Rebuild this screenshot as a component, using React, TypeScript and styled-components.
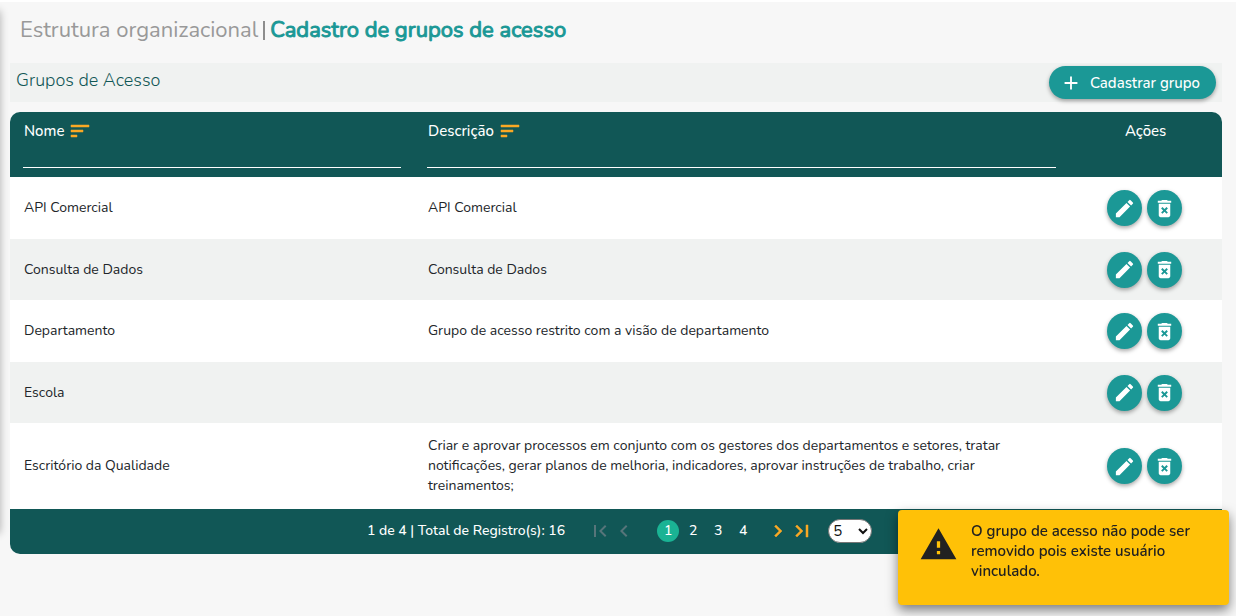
import React from "react";
import styled, { createGlobalStyle } from "styled-components";
import {
  MdAdd,
  MdChevronLeft,
  MdChevronRight,
  MdDeleteForever,
  MdEdit,
  MdFirstPage,
  MdLastPage,
  MdSort,
  MdWarning,
} from "react-icons/md";

const GlobalStyle = createGlobalStyle`
  * { box-sizing: border-box; }
  body {
    margin: 0;
    background: #f7f7f7;
    color: #212529;
    font-family: Nunito, Lato, "Open Sans", sans-serif;
    font-size: 14px;
    line-height: 20px;
  }
  button, input, select { font: inherit; color: inherit; }
`;

const Page = styled.main`
  position: relative;
  min-height: 100vh;
  padding: 0 14px 16px 10px;
  border-top: 2px solid #ffffff;
`;

const MenuEdge = styled.div`
  position: absolute;
  top: 4px;
  left: -10px;
  width: 10px;
  height: 522px;
  box-shadow: 0 5px 8px rgba(0, 0, 0, 0.3);
`;

const Breadcrumb = styled.h1`
  display: flex;
  align-items: center;
  gap: 5px;
  margin: 0;
  padding: 12px 10px 17px;
  font-size: 22px;
  line-height: 32px;
  font-weight: 400;
  color: #999999;
`;

const Divider = styled.span`
  width: 2px;
  height: 19px;
  background: #8d8d8d;
`;

const Current = styled.strong`
  font-weight: 400;
  color: #1b9896;
  -webkit-text-stroke: 1px #1b9896;
`;

const Toolbar = styled.header`
  display: flex;
  justify-content: space-between;
  height: 39px;
  margin-bottom: 10px;
  padding: 3px 6px;
  background: #f0f2f1;
`;

const Heading = styled.h2`
  margin: 0;
  font-size: 18px;
  line-height: 28px;
  font-weight: 300;
  color: #115756;
`;

const AddButton = styled.button`
  display: flex;
  align-items: center;
  gap: 8px;
  height: 33px;
  padding: 0 16px 0 11px;
  border: 0;
  border-radius: 17px;
  background: #1b9896;
  color: #ffffff;
  font-size: 15px;
  font-weight: 500;
  box-shadow: 0 2px 4px rgba(0, 0, 0, 0.35);
  cursor: pointer;
`;

const Panel = styled.section`
  overflow: hidden;
  border-radius: 10px;
  background: #ffffff;
`;

const Table = styled.table`
  width: 100%;
  border-collapse: collapse;
  table-layout: fixed;
`;

const HeadCell = styled.th<{ $width: string; $center?: boolean }>`
  width: ${(p) => p.$width};
  height: 65px;
  padding: 6px 13px 9px;
  vertical-align: top;
  text-align: ${(p) => (p.$center ? "center" : "left")};
  background: #115756;
  color: #ffffff;
  font-size: 15px;
  font-weight: 500;
  line-height: 26px;
`;

const SortLabel = styled.button`
  display: flex;
  align-items: center;
  gap: 4px;
  height: 26px;
  padding: 0 1px;
  border: 0;
  background: none;
  cursor: pointer;

  svg { color: #f9a825; }
  path:not([fill="none"]) { stroke: #f9a825; stroke-width: 0.5px; }
`;

const FilterInput = styled.input`
  display: block;
  width: 100%;
  height: 24px;
  padding: 0;
  border: 0;
  border-bottom: 1px solid #ffffff;
  background: transparent;
  outline: none;
`;

const Row = styled.tr`
  height: 62px;

  &:nth-child(even) {
    height: 61px;
    background: #f0f2f1;
  }

  &:last-child { height: 86px; }
`;

const Cell = styled.td`
  padding: 0 14px;

  &:last-child { padding-right: 16px; }
`;

const Actions = styled.div`
  display: flex;
  justify-content: center;
  gap: 5px;
`;

const RoundButton = styled.button`
  display: grid;
  place-items: center;
  width: 35px;
  height: 36px;
  padding: 0;
  border: 0;
  border-radius: 50%;
  background: #1b9896;
  color: #ffffff;
  box-shadow: 0 2px 4px rgba(0, 0, 0, 0.35);
  cursor: pointer;
`;

const Pager = styled.nav`
  display: flex;
  justify-content: center;
  align-items: center;
  height: 45px;
  padding: 0 0 2px 7px;
  background: #115756;
  color: #ffffff;
  font-weight: 500;
`;

const Summary = styled.span`
  margin-right: 23px;
`;

const PageGroup = styled.div`
  display: flex;
  gap: 3px;
  margin: 0 12px 0 21px;
`;

const PageButton = styled.button<{ $active?: boolean }>`
  width: 22px;
  height: 22px;
  padding: 0;
  border: 0;
  border-radius: 50%;
  background: ${(p) => (p.$active ? "#1ab394" : "transparent")};
  cursor: pointer;
`;

const StepButton = styled.button`
  display: grid;
  place-items: center;
  width: 24px;
  height: 24px;
  padding: 0;
  border: 0;
  background: none;
  color: #f9a825;
  cursor: pointer;

  &:disabled { color: #57757a; cursor: default; }
  &:enabled path:not([fill="none"]) { stroke: #f9a825; stroke-width: 0.5px; }
  &:disabled path { stroke: none; }
`;

const SizeSelect = styled.select`
  width: 44px;
  height: 24px;
  margin-left: 14px;
  border: 1px solid #767676;
  border-radius: 12px;
  background: #ffffff;
  color: #111111;
  font-size: 15px;
  font-weight: 400;
`;

const Toast = styled.div`
  position: fixed;
  right: 7px;
  bottom: 11px;
  display: flex;
  gap: 13px;
  width: 331px;
  height: 95px;
  padding: 11px 30px 0 21px;
  border-radius: 4px;
  background: #ffc107;
  color: #212121;
  font-size: 15px;
  font-weight: 600;
  box-shadow: 0 5px 12px rgba(0, 0, 0, 0.5);

  svg { flex: none; margin-top: 4px; }
  p { margin: 0; }
`;

const groups = [
  { name: "API Comercial", description: "API Comercial" },
  { name: "Consulta de Dados", description: "Consulta de Dados" },
  { name: "Departamento", description: "Grupo de acesso restrito com a visão de departamento" },
  { name: "Escola", description: "" },
  {
    name: "Escritório da Qualidade",
    description:
      "Criar e aprovar processos em conjunto com os gestores dos departamentos e setores, tratar notificações, gerar planos de melhoria, indicadores, aprovar instruções de trabalho, criar treinamentos;",
  },
];

export default function App() {
  return (
    <Page>
      <GlobalStyle />
      <MenuEdge />
      <Breadcrumb>
        <span>Estrutura organizacional</span>
        <Divider />
        <Current>Cadastro de grupos de acesso</Current>
      </Breadcrumb>
      <Toolbar>
        <Heading>Grupos de Acesso</Heading>
        <AddButton type="button">
          <MdAdd size={22} />
          Cadastrar grupo
        </AddButton>
      </Toolbar>
      <Panel>
        <Table>
          <thead>
            <tr>
              <HeadCell $width="33.33%">
                <SortLabel type="button">Nome <MdSort size={24} /></SortLabel>
                <FilterInput aria-label="Filtrar por nome" />
              </HeadCell>
              <HeadCell $width="54.07%">
                <SortLabel type="button">Descrição <MdSort size={24} /></SortLabel>
                <FilterInput aria-label="Filtrar por descrição" />
              </HeadCell>
              <HeadCell $width="12.6%" $center>Ações</HeadCell>
            </tr>
          </thead>
          <tbody>
            {groups.map((group) => (
              <Row key={group.name}>
                <Cell>{group.name}</Cell>
                <Cell>{group.description}</Cell>
                <Cell>
                  <Actions>
                    <RoundButton type="button" aria-label={`Editar ${group.name}`}>
                      <MdEdit size={23} />
                    </RoundButton>
                    <RoundButton type="button" aria-label={`Excluir ${group.name}`}>
                      <MdDeleteForever size={23} />
                    </RoundButton>
                  </Actions>
                </Cell>
              </Row>
            ))}
          </tbody>
        </Table>
        <Pager aria-label="Paginação">
          <Summary>1 de 4 | Total de Registro(s): 16</Summary>
          <StepButton type="button" disabled aria-label="Primeira página"><MdFirstPage size={24} /></StepButton>
          <StepButton type="button" disabled aria-label="Página anterior"><MdChevronLeft size={24} /></StepButton>
          <PageGroup>
            {[1, 2, 3, 4].map((page) => (
              <PageButton key={page} type="button" $active={page === 1}>{page}</PageButton>
            ))}
          </PageGroup>
          <StepButton type="button" aria-label="Próxima página"><MdChevronRight size={24} /></StepButton>
          <StepButton type="button" aria-label="Última página"><MdLastPage size={24} /></StepButton>
          <SizeSelect aria-label="Registros por página" defaultValue="5">
            <option>5</option>
            <option>10</option>
            <option>20</option>
          </SizeSelect>
        </Pager>
      </Panel>
      <Toast role="alert">
        <MdWarning size={39} />
        <p>O grupo de acesso não pode ser removido pois existe usuário vinculado.</p>
      </Toast>
    </Page>
  );
}
